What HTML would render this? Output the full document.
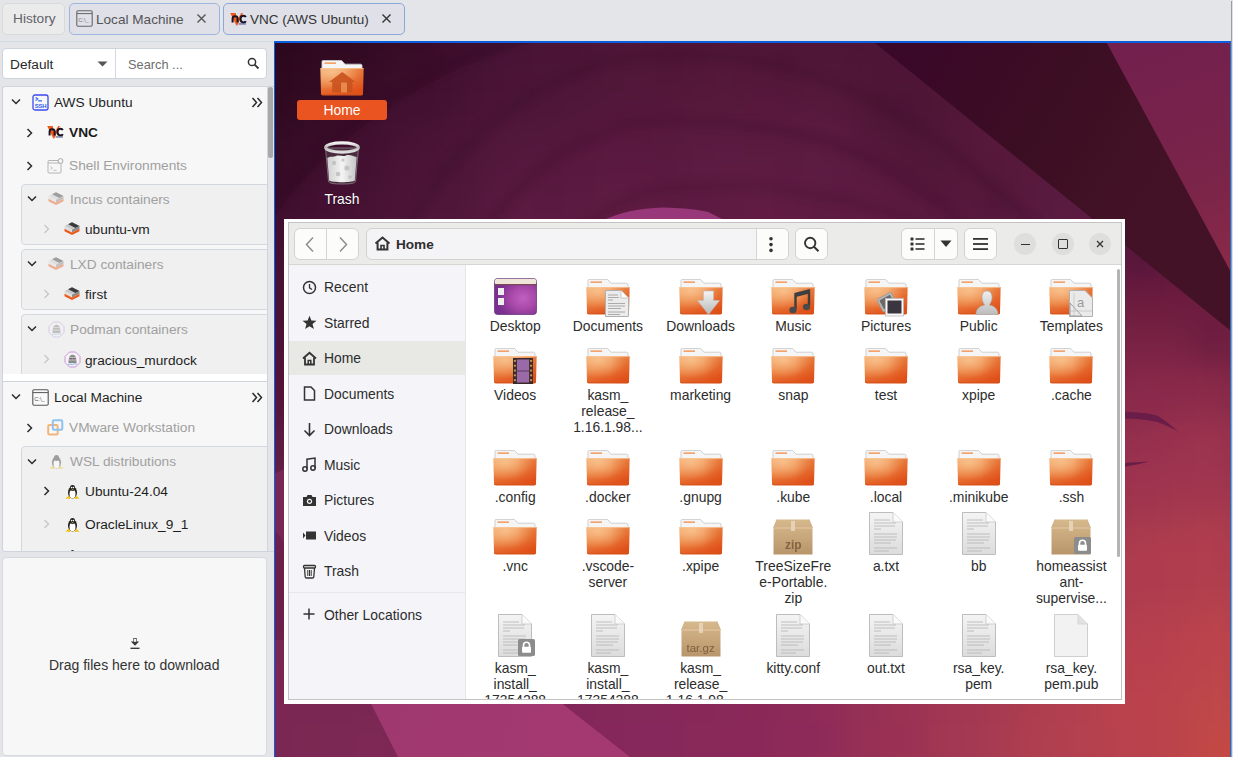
<!DOCTYPE html>
<html><head><meta charset="utf-8">
<style>
*{box-sizing:border-box}
html,body{margin:0;padding:0}
body{width:1233px;height:757px;overflow:hidden;position:relative;background:#e4e5e8;font-family:"Liberation Sans",sans-serif;color:#1e1e1e}
.a{position:absolute}
#wall i{display:block}
.tab{position:absolute;top:3px;height:32px;border-radius:5px;font-size:13.7px;line-height:30px;color:#444}
.t{position:absolute;white-space:nowrap;font-size:13.7px;line-height:16px}
/* tree */
#tree{left:2px;top:86px;width:272px;height:466px;background:#f7f7f7;border:1px solid #cfd4dc;border-right:none;border-radius:3px 0 0 3px;overflow:hidden}
.box{position:absolute;left:18px;width:260px;background:#f0f0f0;border:1px solid #d3d8e0;border-radius:4px}
.gray{color:#a0a0a0}
/* file manager */
#win{left:284px;top:219px;width:841px;height:485px;background:#fff}
#inner{left:4px;top:3px;width:834px;height:478px;border:1px solid #c8c8c8;background:#fff;overflow:hidden}
.ft{position:absolute;font-size:13.9px;line-height:16px;color:#2c2c2c;text-align:center;width:92px;white-space:nowrap}
.btn{background:#fcfcfb;border:1px solid #d2d2ce;border-radius:6px}
</style></head><body>

<!-- ============ TAB BAR ============ -->
<div class="tab" style="left:2px;width:63px;background:#ebebeb;border:1px solid #d9d9d9;padding-left:10px;color:#626268">History</div>
<div class="tab" style="left:69px;width:151px;background:#dfe0e8;border:1px solid #9db4dc;"></div>
<svg class="a" style="left:76px;top:10px" width="17" height="17" viewBox="0 0 17 17"><rect x="0.8" y="0.8" width="15.4" height="15.4" rx="1.2" fill="none" stroke="#666" stroke-width="1.1"/><path d="M0.8,3.6 H16.2" stroke="#666" stroke-width="1"/><text x="2.2" y="11.8" font-family="Liberation Sans" font-size="5.8" fill="#777">C:\_</text></svg>
<div class="t" style="left:96px;top:11.8px;color:#555;font-size:13.6px">Local Machine</div>
<svg class="a" style="left:196px;top:13px" width="11" height="11" viewBox="0 0 11 11"><path d="M1.5,1.5 L9.5,9.5 M9.5,1.5 L1.5,9.5" stroke="#555" stroke-width="1.4"/></svg>
<div class="tab" style="left:223px;width:182px;background:#dfe0e8;border:1px solid #8aa8d8;"></div>
<svg class="a" style="left:230px;top:12px" width="18" height="14" viewBox="0 0 18 14"><path d="M0.2,1 H5.8 L7.2,8.2 L11.2,1 H12.9 L7.3,13.4 H6.3 Z" fill="#f05a1a"/><path d="M2.6,10.6 V6.6 C2.6,4.9 3.7,4.2 5.1,4.2 C6.5,4.2 7.6,4.9 7.6,6.6 V10.6" fill="none" stroke="#1d1220" stroke-width="2"/><path d="M15.8,5.1 C15.4,4.2 14.6,3.8 13.5,3.8 C11.6,3.8 10.5,5 10.5,7.1 C10.5,9.2 11.6,10.4 13.5,10.4 C14.6,10.4 15.4,10 15.8,9.1" fill="none" stroke="#1d1220" stroke-width="2"/><rect x="8.6" y="11.4" width="7.4" height="1.1" fill="#4b5a90"/></svg>
<div class="t" style="left:250px;top:11.6px;color:#333;font-size:13.5px">VNC (AWS Ubuntu)</div>
<svg class="a" style="left:381px;top:13px" width="11" height="11" viewBox="0 0 11 11"><path d="M1.5,1.5 L9.5,9.5 M9.5,1.5 L1.5,9.5" stroke="#333" stroke-width="1.4"/></svg>
<div class="a" style="left:0;top:41px;width:273px;height:1px;background:#d3d9e3"></div>

<!-- ============ COMBO / SEARCH ============ -->
<div class="a" style="left:2px;top:48px;width:265px;height:31px;background:#fff;border:1px solid #cdd4de;border-radius:4px"></div>
<div class="a" style="left:115px;top:49px;width:1px;height:29px;background:#d3d9e3"></div>
<div class="t" style="left:10px;top:56.5px;color:#2a2a2a">Default</div>
<svg class="a" style="left:97px;top:61px" width="11" height="6" viewBox="0 0 11 6"><path d="M0.5,0.5 H10.5 L5.5,5.5 Z" fill="#555"/></svg>
<div class="t" style="left:128px;top:56.5px;color:#6e6e6e;font-size:12.8px">Search ...</div>
<svg class="a" style="left:247px;top:57px" width="13" height="13" viewBox="0 0 13 13"><circle cx="5" cy="5" r="3.6" fill="none" stroke="#333" stroke-width="1.5"/><path d="M7.6,7.6 L11.5,11.5" stroke="#333" stroke-width="1.8"/></svg>

<!-- ============ TREE ============ -->
<div id="tree" class="a">
<!-- section 1 -->
<svg class="a" style="left:8px;top:11px" width="10" height="8" viewBox="0 0 10 8"><path d="M1,1.5 L5,5.5 L9,1.5" fill="none" stroke="#2a2a2a" stroke-width="1.5"/></svg>
<svg class="a" style="left:29px;top:7px" width="17" height="17" viewBox="0 0 17 17"><rect x="1" y="1" width="15" height="15" rx="2" fill="none" stroke="#3b4af2" stroke-width="1.3"/><path d="M3.6,3.4 L5.8,4.9 L3.6,6.4 M6.2,6.9 H10" fill="none" stroke="#2f6cf0" stroke-width="1.2"/><text x="8.5" y="13.8" font-family="Liberation Sans" font-weight="700" font-size="6" fill="#2f5ef0" text-anchor="middle" letter-spacing="-0.2">SSH</text></svg>
<div class="t" style="left:51px;top:7.5px">AWS Ubuntu</div>
<svg class="a" style="left:248px;top:10px" width="12" height="11" viewBox="0 0 12 11"><path d="M1.5,1 L5.5,5.5 L1.5,10 M6.5,1 L10.5,5.5 L6.5,10" fill="none" stroke="#2a2a2a" stroke-width="1.5"/></svg>

<svg class="a" style="left:23px;top:41px" width="8" height="10" viewBox="0 0 8 10"><path d="M1.5,1 L5.5,5 L1.5,9" fill="none" stroke="#2a2a2a" stroke-width="1.5"/></svg>
<svg class="a" style="left:44px;top:38px" width="18" height="14" viewBox="0 0 18 14"><path d="M0.2,1 H5.8 L7.2,8.2 L11.2,1 H12.9 L7.3,13.4 H6.3 Z" fill="#f05a1a"/><path d="M2.6,10.6 V6.6 C2.6,4.9 3.7,4.2 5.1,4.2 C6.5,4.2 7.6,4.9 7.6,6.6 V10.6" fill="none" stroke="#1d1220" stroke-width="2"/><path d="M15.8,5.1 C15.4,4.2 14.6,3.8 13.5,3.8 C11.6,3.8 10.5,5 10.5,7.1 C10.5,9.2 11.6,10.4 13.5,10.4 C14.6,10.4 15.4,10 15.8,9.1" fill="none" stroke="#1d1220" stroke-width="2"/><rect x="8.6" y="11.4" width="7.4" height="1.1" fill="#4b5a90"/></svg>
<div class="t" style="left:66px;top:37.5px;font-weight:700;color:#1a1a1a">VNC</div>

<svg class="a" style="left:23px;top:74px" width="8" height="10" viewBox="0 0 8 10"><path d="M1.5,1 L5.5,5 L1.5,9" fill="none" stroke="#2a2a2a" stroke-width="1.5"/></svg>
<svg class="a" style="left:44px;top:71px" width="17" height="16" viewBox="0 0 17 16"><rect x="1" y="2.5" width="13" height="12.5" rx="1" fill="none" stroke="#b5b5b5" stroke-width="1"/><path d="M1,5 H14" stroke="#b5b5b5" stroke-width="1"/><path d="M3.5,8.5 L5.5,10 L3.5,11.5 M6.5,12.3 H9.5" fill="none" stroke="#b8b8b8" stroke-width="0.9"/><circle cx="13.5" cy="3" r="2.4" fill="#f7f7f7" stroke="#a8a8a8" stroke-width="1"/></svg>
<div class="t gray" style="left:66px;top:70.5px">Shell Environments</div>

<div class="box" style="top:96.5px;height:61px"></div>
<svg class="a" style="left:24px;top:108px" width="10" height="8" viewBox="0 0 10 8"><path d="M1,1.5 L5,5.5 L9,1.5" fill="none" stroke="#2a2a2a" stroke-width="1.5"/></svg>
<svg class="a" style="left:45px;top:104px" width="16" height="16" viewBox="0 0 16 16"><g opacity="0.45" transform="translate(0,1)"><path d="M0.5,4 L8,0.3 L15.5,4 L8,7.7 Z" fill="#c8c8c8"/><path d="M6,1.3 L8,0.3 L15.5,4 L11.5,6 L4.2,2.2 Z" fill="#3a3a3a"/><path d="M0.5,4 L8,7.7 V10.5 L0.5,6.8 Z" fill="#dedede"/><path d="M15.5,4 L8,7.7 V10.5 L15.5,6.8 Z" fill="#8a8a8a"/><path d="M0.5,6.8 L8,10.5 L15.5,6.8 V9.2 L8,12.9 L0.5,9.2 Z" fill="#ea5a1c"/></g></svg>
<div class="t gray" style="left:67px;top:105px">Incus containers</div>
<svg class="a" style="left:40px;top:137px" width="8" height="10" viewBox="0 0 8 10"><path d="M1.5,1 L5.5,5 L1.5,9" fill="none" stroke="#c4c4c4" stroke-width="1.2"/></svg>
<svg class="a" style="left:61px;top:134px" width="16" height="16" viewBox="0 0 16 16"><g transform="translate(0,1)"><path d="M0.5,4 L8,0.3 L15.5,4 L8,7.7 Z" fill="#c8c8c8"/><path d="M6,1.3 L8,0.3 L15.5,4 L11.5,6 L4.2,2.2 Z" fill="#3a3a3a"/><path d="M0.5,4 L8,7.7 V10.5 L0.5,6.8 Z" fill="#dedede"/><path d="M15.5,4 L8,7.7 V10.5 L15.5,6.8 Z" fill="#8a8a8a"/><path d="M0.5,6.8 L8,10.5 L15.5,6.8 V9.2 L8,12.9 L0.5,9.2 Z" fill="#ea5a1c"/></g></svg>
<div class="t" style="left:82px;top:135px">ubuntu-vm</div>

<div class="box" style="top:161.5px;height:61px"></div>
<svg class="a" style="left:24px;top:173px" width="10" height="8" viewBox="0 0 10 8"><path d="M1,1.5 L5,5.5 L9,1.5" fill="none" stroke="#2a2a2a" stroke-width="1.5"/></svg>
<svg class="a" style="left:45px;top:169px" width="16" height="16" viewBox="0 0 16 16"><g opacity="0.45" transform="translate(0,1)"><path d="M0.5,4 L8,0.3 L15.5,4 L8,7.7 Z" fill="#c8c8c8"/><path d="M6,1.3 L8,0.3 L15.5,4 L11.5,6 L4.2,2.2 Z" fill="#3a3a3a"/><path d="M0.5,4 L8,7.7 V10.5 L0.5,6.8 Z" fill="#dedede"/><path d="M15.5,4 L8,7.7 V10.5 L15.5,6.8 Z" fill="#8a8a8a"/><path d="M0.5,6.8 L8,10.5 L15.5,6.8 V9.2 L8,12.9 L0.5,9.2 Z" fill="#ea5a1c"/></g></svg>
<div class="t gray" style="left:67px;top:170px">LXD containers</div>
<svg class="a" style="left:40px;top:202px" width="8" height="10" viewBox="0 0 8 10"><path d="M1.5,1 L5.5,5 L1.5,9" fill="none" stroke="#c4c4c4" stroke-width="1.2"/></svg>
<svg class="a" style="left:61px;top:199px" width="16" height="16" viewBox="0 0 16 16"><g transform="translate(0,1)"><path d="M0.5,4 L8,0.3 L15.5,4 L8,7.7 Z" fill="#c8c8c8"/><path d="M6,1.3 L8,0.3 L15.5,4 L11.5,6 L4.2,2.2 Z" fill="#3a3a3a"/><path d="M0.5,4 L8,7.7 V10.5 L0.5,6.8 Z" fill="#dedede"/><path d="M15.5,4 L8,7.7 V10.5 L15.5,6.8 Z" fill="#8a8a8a"/><path d="M0.5,6.8 L8,10.5 L15.5,6.8 V9.2 L8,12.9 L0.5,9.2 Z" fill="#ea5a1c"/></g></svg>
<div class="t" style="left:82px;top:199.5px">first</div>

<div class="box" style="top:226.5px;height:80px"></div>
<svg class="a" style="left:24px;top:238px" width="10" height="8" viewBox="0 0 10 8"><path d="M1,1.5 L5,5.5 L9,1.5" fill="none" stroke="#2a2a2a" stroke-width="1.5"/></svg>
<svg class="a" style="left:45px;top:234px" width="17" height="17" viewBox="0 0 17 17"><g opacity="0.4"><path d="M5.5,1 H11.5 L16,5.5 V11.5 L11.5,16 H5.5 L1,11.5 V5.5 Z" fill="#f4f4f4" stroke="#a88ad8" stroke-width="0.9"/><path d="M4.5,12 C4.5,7 5.5,3.8 8.5,3.8 C11.5,3.8 12.5,7 12.5,12 Z" fill="#777"/><path d="M5.5,6.5 H11.5 M5,9 H12" stroke="#d0d0d0" stroke-width="0.8"/><path d="M4,13.5 C6,12.5 8,14 10,13 C11,12.5 12,13 13,13.2" fill="none" stroke="#8ab0e0" stroke-width="1"/></g></svg>
<div class="t gray" style="left:67px;top:235px">Podman containers</div>
<svg class="a" style="left:40px;top:267px" width="8" height="10" viewBox="0 0 8 10"><path d="M1.5,1 L5.5,5 L1.5,9" fill="none" stroke="#c4c4c4" stroke-width="1.2"/></svg>
<svg class="a" style="left:61px;top:264px" width="17" height="17" viewBox="0 0 17 17"><path d="M5.5,1 H11.5 L16,5.5 V11.5 L11.5,16 H5.5 L1,11.5 V5.5 Z" fill="#f4f4f4" stroke="#c88ad8" stroke-width="0.9"/><path d="M4.5,12 C4.5,7 5.5,3.8 8.5,3.8 C11.5,3.8 12.5,7 12.5,12 Z" fill="#8a8a8a"/><path d="M5.5,6.5 H11.5 M5,9 H12" stroke="#d0d0d0" stroke-width="0.8"/><path d="M4,13.5 C6,12.5 8,14 10,13 C11,12.5 12,13 13,13.2" fill="none" stroke="#8ab0e0" stroke-width="1"/><circle cx="7" cy="7.6" r="0.7" fill="#6a2a6a"/><circle cx="10" cy="7.6" r="0.7" fill="#6a2a6a"/></svg>
<div class="t" style="left:82px;top:265.5px">gracious_murdock</div>

<div class="a" style="left:0;top:287px;width:265px;height:8px;background:#fff;border-bottom:1px solid #d0d5dd"></div>
<div class="a" style="left:0;top:295px;width:265px;height:175px;background:#f7f7f7"></div>
<!-- section 2 -->
<svg class="a" style="left:8px;top:306px" width="10" height="8" viewBox="0 0 10 8"><path d="M1,1.5 L5,5.5 L9,1.5" fill="none" stroke="#2a2a2a" stroke-width="1.5"/></svg>
<svg class="a" style="left:29px;top:302px" width="17" height="17" viewBox="0 0 17 17"><rect x="0.8" y="0.8" width="15.4" height="15.4" rx="1.2" fill="#fafafa" stroke="#555" stroke-width="1.1"/><path d="M0.8,3.6 H16.2" stroke="#555" stroke-width="1"/><text x="2.2" y="11.8" font-family="Liberation Sans" font-size="5.8" fill="#555">C:\_</text></svg>
<div class="t" style="left:51px;top:302.5px">Local Machine</div>
<svg class="a" style="left:248px;top:305px" width="12" height="11" viewBox="0 0 12 11"><path d="M1.5,1 L5.5,5.5 L1.5,10 M6.5,1 L10.5,5.5 L6.5,10" fill="none" stroke="#2a2a2a" stroke-width="1.5"/></svg>

<svg class="a" style="left:23px;top:336px" width="8" height="10" viewBox="0 0 8 10"><path d="M1.5,1 L5.5,5 L1.5,9" fill="none" stroke="#2a2a2a" stroke-width="1.5"/></svg>
<svg class="a" style="left:44px;top:332px" width="17" height="17" viewBox="0 0 17 17"><rect x="1.2" y="6" width="9.5" height="9.5" rx="1.2" fill="none" stroke="#f2b47a" stroke-width="2"/><rect x="5.8" y="1.2" width="9.5" height="9.5" rx="1.2" fill="none" stroke="#8cc4ee" stroke-width="2"/></svg>
<div class="t gray" style="left:66px;top:332.5px">VMware Workstation</div>

<div class="box" style="top:358.5px;height:120px"></div>
<svg class="a" style="left:24px;top:371px" width="10" height="8" viewBox="0 0 10 8"><path d="M1,1.5 L5,5.5 L9,1.5" fill="none" stroke="#2a2a2a" stroke-width="1.5"/></svg>
<svg class="a" style="left:45px;top:366px" width="17" height="17" viewBox="0 0 17 17"><g opacity="0.4"><ellipse cx="8.5" cy="9.5" rx="4.5" ry="6" fill="#222"/><ellipse cx="8.5" cy="11" rx="3" ry="4.2" fill="#fff"/><ellipse cx="8.5" cy="5" rx="2.6" ry="3" fill="#222"/><path d="M1.5,15.5 L5,12.5 L6.5,16 Z M15.5,15.5 L12,12.5 L10.5,16 Z" fill="#f4c20d"/></g></svg>
<div class="t gray" style="left:67px;top:366.5px">WSL distributions</div>
<svg class="a" style="left:40px;top:399px" width="8" height="10" viewBox="0 0 8 10"><path d="M1.5,1 L5.5,5 L1.5,9" fill="none" stroke="#2a2a2a" stroke-width="1.5"/></svg>
<svg class="a" style="left:61px;top:396px" width="17" height="17" viewBox="0 0 17 17"><ellipse cx="8.5" cy="9.5" rx="4.5" ry="6" fill="#222"/><ellipse cx="8.5" cy="11" rx="3" ry="4.2" fill="#fff"/><ellipse cx="8.5" cy="5" rx="2.6" ry="3" fill="#222"/><circle cx="7.6" cy="4.6" r="0.8" fill="#fff"/><circle cx="9.4" cy="4.6" r="0.8" fill="#fff"/><path d="M7.3,6.2 L8.5,7.2 L9.7,6.2 Z" fill="#f4b80d"/><path d="M1.5,15.5 L5,12.5 L6.5,16 Z M15.5,15.5 L12,12.5 L10.5,16 Z" fill="#f4c20d"/></svg>
<div class="t" style="left:82px;top:396.5px">Ubuntu-24.04</div>
<svg class="a" style="left:40px;top:432px" width="8" height="10" viewBox="0 0 8 10"><path d="M1.5,1 L5.5,5 L1.5,9" fill="none" stroke="#c4c4c4" stroke-width="1.2"/></svg>
<svg class="a" style="left:61px;top:429px" width="17" height="17" viewBox="0 0 17 17"><ellipse cx="8.5" cy="9.5" rx="4.5" ry="6" fill="#222"/><ellipse cx="8.5" cy="11" rx="3" ry="4.2" fill="#fff"/><ellipse cx="8.5" cy="5" rx="2.6" ry="3" fill="#222"/><circle cx="7.6" cy="4.6" r="0.8" fill="#fff"/><circle cx="9.4" cy="4.6" r="0.8" fill="#fff"/><path d="M7.3,6.2 L8.5,7.2 L9.7,6.2 Z" fill="#f4b80d"/><path d="M1.5,15.5 L5,12.5 L6.5,16 Z M15.5,15.5 L12,12.5 L10.5,16 Z" fill="#f4c20d"/></svg>
<div class="t" style="left:82px;top:429.5px">OracleLinux_9_1</div>
<svg class="a" style="left:61px;top:461px" width="17" height="6" viewBox="0 0 17 6"><ellipse cx="8.5" cy="4" rx="1.6" ry="2" fill="#222"/></svg>

<div class="a" style="left:264px;top:0;width:1px;height:464px;background:#d0d5dd"></div>
<div class="a" style="left:265px;top:-1px;width:6px;height:470px;background:#e4e5e8"></div>
<div class="a" style="left:265px;top:0px;width:5px;height:71px;border-radius:2.5px;background:#a8a8a8"></div>
</div>

<!-- ============ DRAG ZONE ============ -->
<div class="a" style="left:2px;top:557px;width:265px;height:199px;background:#f7f7f7;border:1px solid #d6dae0;border-radius:4px"></div>
<svg class="a" style="left:129px;top:637px" width="12" height="13" viewBox="0 0 12 13"><path d="M4.3,1 H7.7 V4.6 H10.2 L6,8.8 L1.8,4.6 H4.3 Z" fill="#3a3a3a"/><rect x="4.9" y="1.8" width="2.2" height="3" fill="#f7f7f7"/><path d="M1.5,11.3 H10.5" stroke="#3a3a3a" stroke-width="1.4"/></svg>
<div class="t" style="left:49px;top:657px;font-size:14px;color:#333">Drag files here to download</div>

<!-- ============ VNC ============ -->
<div class="a" style="left:1231px;top:1px;width:1px;height:756px;background:#9d9d9d"></div>
<div class="a" style="left:1232px;top:0;width:1px;height:757px;background:#dde0ea"></div>
<div id="vnc" class="a" style="left:274px;top:41px;width:957px;height:716px;background:#3a0c28;overflow:hidden;border-top:2px solid #0a5ee0;border-left:1px solid #0a5ee0;border-right:1px solid #1a6ae0">
<div id="wall" class="a" style="left:-41px;top:-40px;width:1050px;height:810px;filter:blur(14px);display:grid;grid-template-columns:repeat(35,30px);grid-auto-rows:30px"><i style="background:#2e081e"></i><i style="background:#2d071d"></i><i style="background:#300920"></i><i style="background:#330a22"></i><i style="background:#350b24"></i><i style="background:#390c28"></i><i style="background:#3b0c29"></i><i style="background:#3f0f2d"></i><i style="background:#411030"></i><i style="background:#431131"></i><i style="background:#461232"></i><i style="background:#471233"></i><i style="background:#491334"></i><i style="background:#4b1434"></i><i style="background:#4b1333"></i><i style="background:#4c1334"></i><i style="background:#4d1435"></i><i style="background:#4c1434"></i><i style="background:#4c1334"></i><i style="background:#4c1434"></i><i style="background:#4a1333"></i><i style="background:#4b1333"></i><i style="background:#4d1434"></i><i style="background:#4f1536"></i><i style="background:#521637"></i><i style="background:#541738"></i><i style="background:#571839"></i><i style="background:#59193a"></i><i style="background:#5c1a3b"></i><i style="background:#5e1b3c"></i><i style="background:#601b3c"></i><i style="background:#621c3d"></i><i style="background:#641d3d"></i><i style="background:#661d3e"></i><i style="background:#681e3e"></i><i style="background:#2d071d"></i><i style="background:#2a061b"></i><i style="background:#300920"></i><i style="background:#310921"></i><i style="background:#320a22"></i><i style="background:#380b27"></i><i style="background:#390b27"></i><i style="background:#3e0e2d"></i><i style="background:#401030"></i><i style="background:#421131"></i><i style="background:#461233"></i><i style="background:#461232"></i><i style="background:#491334"></i><i style="background:#4c1434"></i><i style="background:#4a1232"></i><i style="background:#4b1333"></i><i style="background:#4e1535"></i><i style="background:#4b1333"></i><i style="background:#4a1232"></i><i style="background:#4c1434"></i><i style="background:#491232"></i><i style="background:#491333"></i><i style="background:#4b1434"></i><i style="background:#4e1535"></i><i style="background:#511636"></i><i style="background:#541738"></i><i style="background:#571839"></i><i style="background:#59193a"></i><i style="background:#5c1a3b"></i><i style="background:#5e1b3c"></i><i style="background:#601b3d"></i><i style="background:#621c3d"></i><i style="background:#641d3e"></i><i style="background:#661d3e"></i><i style="background:#681e3e"></i><i style="background:#2f0920"></i><i style="background:#2f0920"></i><i style="background:#320a22"></i><i style="background:#350b24"></i><i style="background:#360b26"></i><i style="background:#3b0d29"></i><i style="background:#3d0d2b"></i><i style="background:#400f2e"></i><i style="background:#431131"></i><i style="background:#461234"></i><i style="background:#481334"></i><i style="background:#491334"></i><i style="background:#4d1536"></i><i style="background:#4e1536"></i><i style="background:#4d1435"></i><i style="background:#4f1636"></i><i style="background:#511737"></i><i style="background:#4f1536"></i><i style="background:#4e1535"></i><i style="background:#501737"></i><i style="background:#4d1535"></i><i style="background:#4a1333"></i><i style="background:#4a1332"></i><i style="background:#4c1434"></i><i style="background:#501636"></i><i style="background:#531738"></i><i style="background:#561839"></i><i style="background:#59193b"></i><i style="background:#5c1a3b"></i><i style="background:#5e1b3c"></i><i style="background:#601b3d"></i><i style="background:#631c3d"></i><i style="background:#651d3e"></i><i style="background:#671d3e"></i><i style="background:#691e3f"></i><i style="background:#310a22"></i><i style="background:#2f0920"></i><i style="background:#340b24"></i><i style="background:#360b26"></i><i style="background:#380c27"></i><i style="background:#3d0e2c"></i><i style="background:#3e0e2d"></i><i style="background:#41102f"></i><i style="background:#471234"></i><i style="background:#481335"></i><i style="background:#4a1436"></i><i style="background:#4d1537"></i><i style="background:#4e1637"></i><i style="background:#4f1638"></i><i style="background:#511638"></i><i style="background:#521838"></i><i style="background:#521838"></i><i style="background:#531739"></i><i style="background:#521739"></i><i style="background:#521838"></i><i style="background:#501737"></i><i style="background:#491332"></i><i style="background:#471230"></i><i style="background:#4b1433"></i><i style="background:#501636"></i><i style="background:#531738"></i><i style="background:#56183a"></i><i style="background:#59193b"></i><i style="background:#5b1a3c"></i><i style="background:#5e1b3c"></i><i style="background:#601b3d"></i><i style="background:#631c3d"></i><i style="background:#651d3e"></i><i style="background:#681d3e"></i><i style="background:#6a1e3f"></i><i style="background:#340b25"></i><i style="background:#340b24"></i><i style="background:#370c27"></i><i style="background:#3b0d2a"></i><i style="background:#3c0d2b"></i><i style="background:#410f2f"></i><i style="background:#441131"></i><i style="background:#461232"></i><i style="background:#4b1436"></i><i style="background:#4f1639"></i><i style="background:#4f1639"></i><i style="background:#51163a"></i><i style="background:#55173c"></i><i style="background:#55173b"></i><i style="background:#54183b"></i><i style="background:#57193d"></i><i style="background:#57193d"></i><i style="background:#56193c"></i><i style="background:#56193c"></i><i style="background:#57193d"></i><i style="background:#54183b"></i><i style="background:#4e1535"></i><i style="background:#4b1434"></i><i style="background:#4d1535"></i><i style="background:#501637"></i><i style="background:#531738"></i><i style="background:#55183a"></i><i style="background:#58193b"></i><i style="background:#5b1a3c"></i><i style="background:#5d1a3d"></i><i style="background:#601b3d"></i><i style="background:#631c3d"></i><i style="background:#651c3e"></i><i style="background:#681d3e"></i><i style="background:#6b1e3f"></i><i style="background:#360c26"></i><i style="background:#350b24"></i><i style="background:#390d29"></i><i style="background:#3c0d2b"></i><i style="background:#3e0e2c"></i><i style="background:#441131"></i><i style="background:#461233"></i><i style="background:#481334"></i><i style="background:#4f1639"></i><i style="background:#52173b"></i><i style="background:#52173b"></i><i style="background:#55173c"></i><i style="background:#58183e"></i><i style="background:#58183e"></i><i style="background:#57183d"></i><i style="background:#591a3f"></i><i style="background:#5a1a40"></i><i style="background:#5a1a3f"></i><i style="background:#59193e"></i><i style="background:#5a1a40"></i><i style="background:#58193e"></i><i style="background:#53173a"></i><i style="background:#4d1435"></i><i style="background:#4d1535"></i><i style="background:#511637"></i><i style="background:#511737"></i><i style="background:#541839"></i><i style="background:#57193c"></i><i style="background:#591a3d"></i><i style="background:#5c1a3d"></i><i style="background:#5f1a3d"></i><i style="background:#621b3d"></i><i style="background:#651c3d"></i><i style="background:#681d3e"></i><i style="background:#6b1e3f"></i><i style="background:#3a0c29"></i><i style="background:#3a0c2a"></i><i style="background:#3c0d2b"></i><i style="background:#400f2f"></i><i style="background:#411030"></i><i style="background:#461233"></i><i style="background:#4a1437"></i><i style="background:#4b1437"></i><i style="background:#52173b"></i><i style="background:#58193e"></i><i style="background:#56183d"></i><i style="background:#57193e"></i><i style="background:#5c1a40"></i><i style="background:#5b1a40"></i><i style="background:#59193e"></i><i style="background:#5a193f"></i><i style="background:#5c1a40"></i><i style="background:#5f1b41"></i><i style="background:#5c1a40"></i><i style="background:#5a1a3f"></i><i style="background:#5a193f"></i><i style="background:#5c1940"></i><i style="background:#54173a"></i><i style="background:#511638"></i><i style="background:#511738"></i><i style="background:#4e1636"></i><i style="background:#53183a"></i><i style="background:#561a3e"></i><i style="background:#581a3d"></i><i style="background:#5b193c"></i><i style="background:#5d193c"></i><i style="background:#601a3c"></i><i style="background:#641b3d"></i><i style="background:#691d3e"></i><i style="background:#6c1e3f"></i><i style="background:#3c0d2b"></i><i style="background:#3b0c2b"></i><i style="background:#3e0e2d"></i><i style="background:#421030"></i><i style="background:#431031"></i><i style="background:#481335"></i><i style="background:#4c1538"></i><i style="background:#4d1538"></i><i style="background:#54183c"></i><i style="background:#591a3f"></i><i style="background:#57193e"></i><i style="background:#59193f"></i><i style="background:#5d1b41"></i><i style="background:#5d1a41"></i><i style="background:#5b1a3f"></i><i style="background:#5b1a3f"></i><i style="background:#5d1a41"></i><i style="background:#5f1b42"></i><i style="background:#5e1a41"></i><i style="background:#5c1a3f"></i><i style="background:#5c1a40"></i><i style="background:#5d1a41"></i><i style="background:#5b193f"></i><i style="background:#57183b"></i><i style="background:#55183a"></i><i style="background:#521738"></i><i style="background:#56193c"></i><i style="background:#571a3e"></i><i style="background:#591a3d"></i><i style="background:#59173b"></i><i style="background:#57163a"></i><i style="background:#5d183b"></i><i style="background:#641b3c"></i><i style="background:#6a1d3e"></i><i style="background:#6e1f3f"></i><i style="background:#400f2f"></i><i style="background:#400f2f"></i><i style="background:#410f2f"></i><i style="background:#431030"></i><i style="background:#441132"></i><i style="background:#481334"></i><i style="background:#4b1436"></i><i style="background:#4e1538"></i><i style="background:#52173b"></i><i style="background:#56183d"></i><i style="background:#57183d"></i><i style="background:#58193e"></i><i style="background:#5b1a40"></i><i style="background:#5b1a40"></i><i style="background:#5c1a40"></i><i style="background:#5d1a41"></i><i style="background:#5d1b41"></i><i style="background:#5e1b41"></i><i style="background:#5d1a40"></i><i style="background:#5d1a40"></i><i style="background:#5d1a40"></i><i style="background:#5d1a40"></i><i style="background:#5c1a3f"></i><i style="background:#5b1a3e"></i><i style="background:#5b1a3e"></i><i style="background:#5a1a3d"></i><i style="background:#5b1a3e"></i><i style="background:#5b1a3e"></i><i style="background:#5d193d"></i><i style="background:#57163a"></i><i style="background:#4f1238"></i><i style="background:#5c173a"></i><i style="background:#661b3c"></i><i style="background:#6c1d3e"></i><i style="background:#701f3f"></i><i style="background:#431030"></i><i style="background:#411030"></i><i style="background:#431031"></i><i style="background:#451132"></i><i style="background:#471233"></i><i style="background:#4a1335"></i><i style="background:#4c1437"></i><i style="background:#4f1538"></i><i style="background:#52173a"></i><i style="background:#55183c"></i><i style="background:#56183d"></i><i style="background:#58193e"></i><i style="background:#5a1a3f"></i><i style="background:#5c1a40"></i><i style="background:#5d1b41"></i><i style="background:#5e1b42"></i><i style="background:#5e1b41"></i><i style="background:#5e1b41"></i><i style="background:#5e1b40"></i><i style="background:#5e1b40"></i><i style="background:#5e1b40"></i><i style="background:#5e1b40"></i><i style="background:#5e1b40"></i><i style="background:#5c1a40"></i><i style="background:#5d1a40"></i><i style="background:#5f1b3f"></i><i style="background:#5e1a40"></i><i style="background:#5b1840"></i><i style="background:#601a3f"></i><i style="background:#63193b"></i><i style="background:#661939"></i><i style="background:#671a3b"></i><i style="background:#6b1c3d"></i><i style="background:#6e1e3e"></i><i style="background:#712040"></i><i style="background:#481033"></i><i style="background:#481033"></i><i style="background:#481133"></i><i style="background:#491133"></i><i style="background:#4a1335"></i><i style="background:#4c1436"></i><i style="background:#4f1538"></i><i style="background:#52163a"></i><i style="background:#54173b"></i><i style="background:#56183c"></i><i style="background:#57193d"></i><i style="background:#59193e"></i><i style="background:#5b1a3f"></i><i style="background:#5d1b41"></i><i style="background:#5e1b42"></i><i style="background:#5e1b42"></i><i style="background:#5e1b42"></i><i style="background:#5f1b42"></i><i style="background:#601c41"></i><i style="background:#611c41"></i><i style="background:#621c41"></i><i style="background:#621c41"></i><i style="background:#601c41"></i><i style="background:#5d1a40"></i><i style="background:#5e1b40"></i><i style="background:#631c41"></i><i style="background:#621b41"></i><i style="background:#5d1940"></i><i style="background:#661c40"></i><i style="background:#701e3f"></i><i style="background:#6f1d3c"></i><i style="background:#6f1d3d"></i><i style="background:#6b1c3d"></i><i style="background:#6d1d3e"></i><i style="background:#732040"></i><i style="background:#4b1134"></i><i style="background:#4a1034"></i><i style="background:#4b1134"></i><i style="background:#4c1235"></i><i style="background:#4e1436"></i><i style="background:#501538"></i><i style="background:#53163a"></i><i style="background:#56183c"></i><i style="background:#58193e"></i><i style="background:#58193e"></i><i style="background:#59193e"></i><i style="background:#5b1a3f"></i><i style="background:#5d1b40"></i><i style="background:#5f1b42"></i><i style="background:#601c43"></i><i style="background:#601c44"></i><i style="background:#611c44"></i><i style="background:#611c43"></i><i style="background:#621d42"></i><i style="background:#641d43"></i><i style="background:#661e43"></i><i style="background:#671e44"></i><i style="background:#661e44"></i><i style="background:#641d42"></i><i style="background:#661e42"></i><i style="background:#6c2043"></i><i style="background:#702144"></i><i style="background:#702143"></i><i style="background:#742143"></i><i style="background:#792242"></i><i style="background:#7a2242"></i><i style="background:#792242"></i><i style="background:#6a1c3d"></i><i style="background:#6f1e3f"></i><i style="background:#772241"></i><i style="background:#4f1135"></i><i style="background:#501034"></i><i style="background:#4f1135"></i><i style="background:#501337"></i><i style="background:#521539"></i><i style="background:#54163a"></i><i style="background:#56183c"></i><i style="background:#59193f"></i><i style="background:#5a1a40"></i><i style="background:#5a1a40"></i><i style="background:#5a1a40"></i><i style="background:#5c1b40"></i><i style="background:#5f1b42"></i><i style="background:#611c44"></i><i style="background:#631d46"></i><i style="background:#641e47"></i><i style="background:#631e46"></i><i style="background:#641d45"></i><i style="background:#651e44"></i><i style="background:#671f44"></i><i style="background:#691f46"></i><i style="background:#6a2047"></i><i style="background:#6a2047"></i><i style="background:#6b2046"></i><i style="background:#6f2145"></i><i style="background:#772446"></i><i style="background:#802848"></i><i style="background:#822849"></i><i style="background:#802646"></i><i style="background:#852747"></i><i style="background:#872847"></i><i style="background:#872847"></i><i style="background:#8a2947"></i><i style="background:#802544"></i><i style="background:#802644"></i><i style="background:#531338"></i><i style="background:#521236"></i><i style="background:#531438"></i><i style="background:#55163a"></i><i style="background:#56173b"></i><i style="background:#57183d"></i><i style="background:#59193e"></i><i style="background:#5a1a3f"></i><i style="background:#5a1a40"></i><i style="background:#5a1a40"></i><i style="background:#5b1a40"></i><i style="background:#5e1b41"></i><i style="background:#611c43"></i><i style="background:#631d45"></i><i style="background:#641e47"></i><i style="background:#641e48"></i><i style="background:#641e47"></i><i style="background:#661e46"></i><i style="background:#681f45"></i><i style="background:#6a2046"></i><i style="background:#6b2047"></i><i style="background:#6a2048"></i><i style="background:#6a2048"></i><i style="background:#6d2147"></i><i style="background:#742346"></i><i style="background:#7d2747"></i><i style="background:#842949"></i><i style="background:#862a4a"></i><i style="background:#872948"></i><i style="background:#8c2a49"></i><i style="background:#8e2a4a"></i><i style="background:#8e2b49"></i><i style="background:#8e2c48"></i><i style="background:#8c2b47"></i><i style="background:#892a46"></i><i style="background:#5b1a40"></i><i style="background:#5b1b41"></i><i style="background:#5b1a3f"></i><i style="background:#5b193f"></i><i style="background:#5b193f"></i><i style="background:#5b1a3f"></i><i style="background:#5c1a40"></i><i style="background:#5b1a40"></i><i style="background:#5b1a40"></i><i style="background:#5b1a40"></i><i style="background:#5d1b41"></i><i style="background:#601c42"></i><i style="background:#631d44"></i><i style="background:#641e46"></i><i style="background:#651e47"></i><i style="background:#651e47"></i><i style="background:#661e47"></i><i style="background:#681f47"></i><i style="background:#6b2047"></i><i style="background:#6d2147"></i><i style="background:#6e2147"></i><i style="background:#6d2148"></i><i style="background:#6d2148"></i><i style="background:#722347"></i><i style="background:#792547"></i><i style="background:#812848"></i><i style="background:#852a49"></i><i style="background:#882a49"></i><i style="background:#8d2c49"></i><i style="background:#942e4b"></i><i style="background:#96304b"></i><i style="background:#9c334c"></i><i style="background:#9f354d"></i><i style="background:#98314b"></i><i style="background:#932f49"></i><i style="background:#5f1d43"></i><i style="background:#5d1c42"></i><i style="background:#601d44"></i><i style="background:#611c44"></i><i style="background:#601c43"></i><i style="background:#601c42"></i><i style="background:#601c42"></i><i style="background:#5f1c42"></i><i style="background:#5f1c42"></i><i style="background:#601c42"></i><i style="background:#621d43"></i><i style="background:#641d44"></i><i style="background:#661e46"></i><i style="background:#681f47"></i><i style="background:#681f48"></i><i style="background:#691f48"></i><i style="background:#6a2048"></i><i style="background:#6d2148"></i><i style="background:#702248"></i><i style="background:#732348"></i><i style="background:#742349"></i><i style="background:#742449"></i><i style="background:#762449"></i><i style="background:#7a2649"></i><i style="background:#802849"></i><i style="background:#862a49"></i><i style="background:#8a2c49"></i><i style="background:#8f2d4a"></i><i style="background:#96304b"></i><i style="background:#9d334d"></i><i style="background:#9f344e"></i><i style="background:#9f344d"></i><i style="background:#a0354d"></i><i style="background:#9d344c"></i><i style="background:#99324a"></i><i style="background:#6c224c"></i><i style="background:#6f234e"></i><i style="background:#6c224c"></i><i style="background:#682048"></i><i style="background:#661e46"></i><i style="background:#651e45"></i><i style="background:#651e45"></i><i style="background:#651e45"></i><i style="background:#661e46"></i><i style="background:#661e46"></i><i style="background:#681f46"></i><i style="background:#691f47"></i><i style="background:#6b2048"></i><i style="background:#6d204a"></i><i style="background:#6f214b"></i><i style="background:#70224b"></i><i style="background:#72224b"></i><i style="background:#74234b"></i><i style="background:#76244b"></i><i style="background:#79254b"></i><i style="background:#7c264b"></i><i style="background:#7f274c"></i><i style="background:#81284c"></i><i style="background:#852a4b"></i><i style="background:#892c4b"></i><i style="background:#8e2e4a"></i><i style="background:#93304a"></i><i style="background:#97314b"></i><i style="background:#9c334b"></i><i style="background:#a0344c"></i><i style="background:#a1354d"></i><i style="background:#a3374c"></i><i style="background:#a4374c"></i><i style="background:#a3374b"></i><i style="background:#a0364a"></i><i style="background:#752652"></i><i style="background:#7a2856"></i><i style="background:#732550"></i><i style="background:#6e224c"></i><i style="background:#6b2049"></i><i style="background:#692048"></i><i style="background:#6a2048"></i><i style="background:#6b2049"></i><i style="background:#6d214a"></i><i style="background:#6d214a"></i><i style="background:#6d214a"></i><i style="background:#6e214a"></i><i style="background:#71224c"></i><i style="background:#74224e"></i><i style="background:#772350"></i><i style="background:#782451"></i><i style="background:#792451"></i><i style="background:#7a254f"></i><i style="background:#7d264e"></i><i style="background:#81284e"></i><i style="background:#862a4f"></i><i style="background:#8a2b51"></i><i style="background:#8c2c51"></i><i style="background:#8e2d4f"></i><i style="background:#922f4d"></i><i style="background:#97314c"></i><i style="background:#9c344c"></i><i style="background:#a0354c"></i><i style="background:#a4374c"></i><i style="background:#aa3a4c"></i><i style="background:#ac3b4c"></i><i style="background:#ae3d4c"></i><i style="background:#b13e4c"></i><i style="background:#ac3c4b"></i><i style="background:#a7394a"></i><i style="background:#70234d"></i><i style="background:#70224c"></i><i style="background:#70234d"></i><i style="background:#6f224c"></i><i style="background:#6e214b"></i><i style="background:#6d214a"></i><i style="background:#6e214b"></i><i style="background:#70224c"></i><i style="background:#72234e"></i><i style="background:#72234e"></i><i style="background:#72234d"></i><i style="background:#72234d"></i><i style="background:#75234f"></i><i style="background:#792452"></i><i style="background:#7d2556"></i><i style="background:#7e2657"></i><i style="background:#7e2656"></i><i style="background:#7f2653"></i><i style="background:#822851"></i><i style="background:#872a51"></i><i style="background:#8e2d53"></i><i style="background:#932f56"></i><i style="background:#952f56"></i><i style="background:#953053"></i><i style="background:#983250"></i><i style="background:#9f354e"></i><i style="background:#a5384e"></i><i style="background:#a8394e"></i><i style="background:#aa3a4d"></i><i style="background:#b03d4c"></i><i style="background:#b23e4c"></i><i style="background:#b23f4c"></i><i style="background:#b3404c"></i><i style="background:#b13e4b"></i><i style="background:#ad3c4a"></i><i style="background:#6f214a"></i><i style="background:#6d2048"></i><i style="background:#6f224b"></i><i style="background:#71234c"></i><i style="background:#70224c"></i><i style="background:#70224c"></i><i style="background:#71234d"></i><i style="background:#73234e"></i><i style="background:#74244f"></i><i style="background:#74244f"></i><i style="background:#74244e"></i><i style="background:#75244f"></i><i style="background:#782451"></i><i style="background:#7c2555"></i><i style="background:#7f2658"></i><i style="background:#80265a"></i><i style="background:#802659"></i><i style="background:#812755"></i><i style="background:#852953"></i><i style="background:#8b2b53"></i><i style="background:#922e56"></i><i style="background:#973059"></i><i style="background:#98305a"></i><i style="background:#983056"></i><i style="background:#9c3351"></i><i style="background:#a4374f"></i><i style="background:#ab3a50"></i><i style="background:#ac3a50"></i><i style="background:#ad3b4e"></i><i style="background:#b03d4c"></i><i style="background:#b23e4c"></i><i style="background:#b33f4b"></i><i style="background:#b5404b"></i><i style="background:#b5404b"></i><i style="background:#b23f4a"></i><i style="background:#75244f"></i><i style="background:#772550"></i><i style="background:#75244f"></i><i style="background:#74244e"></i><i style="background:#73244e"></i><i style="background:#73234d"></i><i style="background:#73234e"></i><i style="background:#74244e"></i><i style="background:#74244f"></i><i style="background:#74244f"></i><i style="background:#75244f"></i><i style="background:#782450"></i><i style="background:#7b2553"></i><i style="background:#7e2655"></i><i style="background:#802658"></i><i style="background:#80265a"></i><i style="background:#812659"></i><i style="background:#832856"></i><i style="background:#872a54"></i><i style="background:#8d2c54"></i><i style="background:#932f56"></i><i style="background:#973059"></i><i style="background:#983059"></i><i style="background:#993156"></i><i style="background:#9e3452"></i><i style="background:#a6384f"></i><i style="background:#ab3a4f"></i><i style="background:#ac3a4f"></i><i style="background:#af3c4e"></i><i style="background:#b53f4c"></i><i style="background:#b8414c"></i><i style="background:#b9424b"></i><i style="background:#bd454a"></i><i style="background:#bc444a"></i><i style="background:#b8424a"></i><i style="background:#782551"></i><i style="background:#7a2652"></i><i style="background:#782551"></i><i style="background:#772550"></i><i style="background:#76254f"></i><i style="background:#75244f"></i><i style="background:#75244f"></i><i style="background:#75244f"></i><i style="background:#75244f"></i><i style="background:#762450"></i><i style="background:#782451"></i><i style="background:#7b2553"></i><i style="background:#7e2654"></i><i style="background:#802656"></i><i style="background:#812757"></i><i style="background:#822758"></i><i style="background:#832757"></i><i style="background:#862956"></i><i style="background:#8a2a55"></i><i style="background:#8e2c54"></i><i style="background:#932e55"></i><i style="background:#973056"></i><i style="background:#993156"></i><i style="background:#9b3354"></i><i style="background:#a03651"></i><i style="background:#a6394f"></i><i style="background:#ab3a4f"></i><i style="background:#ae3c4e"></i><i style="background:#b33f4c"></i><i style="background:#ba414c"></i><i style="background:#bc424c"></i><i style="background:#bc434b"></i><i style="background:#c0464a"></i><i style="background:#bf454a"></i><i style="background:#bc4449"></i><i style="background:#792651"></i><i style="background:#7a2652"></i><i style="background:#792651"></i><i style="background:#792651"></i><i style="background:#782651"></i><i style="background:#782651"></i><i style="background:#772550"></i><i style="background:#772450"></i><i style="background:#782451"></i><i style="background:#7b2553"></i><i style="background:#7e2555"></i><i style="background:#802656"></i><i style="background:#812756"></i><i style="background:#832757"></i><i style="background:#842757"></i><i style="background:#852857"></i><i style="background:#872957"></i><i style="background:#892956"></i><i style="background:#8c2a56"></i><i style="background:#8f2c55"></i><i style="background:#942e55"></i><i style="background:#983154"></i><i style="background:#9b3353"></i><i style="background:#9f3552"></i><i style="background:#a33851"></i><i style="background:#a83a4f"></i><i style="background:#ad3d4e"></i><i style="background:#b13f4d"></i><i style="background:#b7414c"></i><i style="background:#bb424b"></i><i style="background:#bd434b"></i><i style="background:#be454a"></i><i style="background:#c24849"></i><i style="background:#c14748"></i><i style="background:#be4648"></i><i style="background:#7a2652"></i><i style="background:#7a2652"></i><i style="background:#7a2752"></i><i style="background:#7a2752"></i><i style="background:#7a2753"></i><i style="background:#7a2752"></i><i style="background:#792651"></i><i style="background:#792552"></i><i style="background:#7c2553"></i><i style="background:#802656"></i><i style="background:#822658"></i><i style="background:#832658"></i><i style="background:#842758"></i><i style="background:#852859"></i><i style="background:#862859"></i><i style="background:#872858"></i><i style="background:#892958"></i><i style="background:#8b2957"></i><i style="background:#8d2a57"></i><i style="background:#8f2b57"></i><i style="background:#942e55"></i><i style="background:#9a3254"></i><i style="background:#9d3353"></i><i style="background:#a23752"></i><i style="background:#a53951"></i><i style="background:#a93b50"></i><i style="background:#b03f4e"></i><i style="background:#b4414d"></i><i style="background:#b8424c"></i><i style="background:#be444b"></i><i style="background:#c0444a"></i><i style="background:#c04649"></i><i style="background:#c44a48"></i><i style="background:#c34947"></i><i style="background:#c14746"></i><i style="background:#7a2652"></i><i style="background:#7a2752"></i><i style="background:#7a2852"></i><i style="background:#7b2853"></i><i style="background:#7c2854"></i><i style="background:#7b2753"></i><i style="background:#7a2652"></i><i style="background:#7b2653"></i><i style="background:#7e2655"></i><i style="background:#822658"></i><i style="background:#84265a"></i><i style="background:#84265a"></i><i style="background:#852759"></i><i style="background:#86285a"></i><i style="background:#86285a"></i><i style="background:#882958"></i><i style="background:#8a2958"></i><i style="background:#8b2958"></i><i style="background:#8e2a58"></i><i style="background:#8e2a58"></i><i style="background:#942e55"></i><i style="background:#9b3254"></i><i style="background:#9c3254"></i><i style="background:#a43852"></i><i style="background:#a63a52"></i><i style="background:#aa3c50"></i><i style="background:#b3414e"></i><i style="background:#b4424e"></i><i style="background:#b9434c"></i><i style="background:#bc444c"></i><i style="background:#bd444b"></i><i style="background:#c04648"></i><i style="background:#c64a44"></i><i style="background:#c94b42"></i><i style="background:#c64944"></i><i style="background:#7a2652"></i><i style="background:#7a2652"></i><i style="background:#7a2752"></i><i style="background:#7b2753"></i><i style="background:#7c2854"></i><i style="background:#7b2753"></i><i style="background:#7a2652"></i><i style="background:#7b2653"></i><i style="background:#7f2655"></i><i style="background:#822658"></i><i style="background:#842659"></i><i style="background:#842659"></i><i style="background:#842759"></i><i style="background:#862859"></i><i style="background:#862859"></i><i style="background:#882958"></i><i style="background:#8a2958"></i><i style="background:#8b2958"></i><i style="background:#8e2a57"></i><i style="background:#8f2b57"></i><i style="background:#952e55"></i><i style="background:#9b3254"></i><i style="background:#9d3353"></i><i style="background:#a23752"></i><i style="background:#a53952"></i><i style="background:#aa3c50"></i><i style="background:#b1404e"></i><i style="background:#b4414e"></i><i style="background:#b8424c"></i><i style="background:#bb434c"></i><i style="background:#bc444a"></i><i style="background:#c14647"></i><i style="background:#c94b42"></i><i style="background:#cb4c40"></i><i style="background:#c74a42"></i><i style="background:#792652"></i><i style="background:#7a2652"></i><i style="background:#7a2752"></i><i style="background:#7a2752"></i><i style="background:#7b2753"></i><i style="background:#7a2752"></i><i style="background:#7a2652"></i><i style="background:#7c2653"></i><i style="background:#7e2654"></i><i style="background:#812657"></i><i style="background:#822658"></i><i style="background:#832658"></i><i style="background:#842758"></i><i style="background:#852858"></i><i style="background:#862857"></i><i style="background:#882957"></i><i style="background:#8a2957"></i><i style="background:#8b2a57"></i><i style="background:#8d2b56"></i><i style="background:#902c56"></i><i style="background:#952f54"></i><i style="background:#9a3253"></i><i style="background:#9d3453"></i><i style="background:#a13652"></i><i style="background:#a53951"></i><i style="background:#a93b4f"></i><i style="background:#ae3e4e"></i><i style="background:#b2404d"></i><i style="background:#b6414c"></i><i style="background:#b9424b"></i><i style="background:#bb434a"></i><i style="background:#bf4647"></i><i style="background:#c54844"></i><i style="background:#c74943"></i><i style="background:#c44843"></i></div>
<svg id="wsvg" class="a" style="left:-275px;top:-43px" width="1233" height="800" viewBox="0 0 1233 800">
<defs>
<filter id="sb" x="-10%" y="-10%" width="120%" height="120%"><feGaussianBlur stdDeviation="5"/></filter>
<linearGradient id="gb" x1="920" y1="60" x2="1150" y2="200" gradientUnits="userSpaceOnUse"><stop offset="0" stop-color="#3a0828"/><stop offset="0.5" stop-color="#3c0e23"/><stop offset="1" stop-color="#431226"/></linearGradient>
<linearGradient id="gp" x1="1150" y1="50" x2="1231" y2="270" gradientUnits="userSpaceOnUse"><stop offset="0" stop-color="#73204e"/><stop offset="0.6" stop-color="#7a2449"/><stop offset="1" stop-color="#8a2a48"/></linearGradient>
<linearGradient id="gw" x1="400" y1="700" x2="560" y2="757" gradientUnits="userSpaceOnUse"><stop offset="0" stop-color="#a03870"/><stop offset="1" stop-color="#a33970"/></linearGradient>
</defs>
<g fill="#8a3068" opacity="0.07">
<path d="M275,215 C330,140 420,75 530,43 L1231,43 L1231,757 L275,757 Z"/>
<path d="M385,300 C420,190 500,100 612,67 C680,55 760,60 830,85 C870,100 905,118 960,160 L1040,230 L1040,700 L385,700 Z"/>
<path d="M455,300 C500,200 560,150 633,131 C700,122 780,130 844,152 C880,165 920,185 980,240 L980,700 L455,700 Z"/>
<path d="M540,300 C580,230 620,200 675,194 C720,190 780,193 802,198 C850,205 900,211 950,250 L950,700 L540,700 Z"/>
</g>
<g fill="none" stroke="#1e0414" stroke-width="9" opacity="0.13" filter="url(#sb)" transform="translate(-2,-3)">
<path d="M272,212 C327,137 417,72 527,40"/>
<path d="M382,300 C417,187 497,97 609,64 C677,52 757,57 827,82 C867,97 902,115 957,157 L1037,227"/>
<path d="M452,300 C497,197 557,147 630,128 C697,119 777,127 841,149 C877,162 917,182 977,237"/>
<path d="M537,300 C577,227 617,197 672,191 C717,187 777,190 799,195 C847,202 897,208 947,247"/>
</g>
<polygon points="875,43 1107,43 1231,272 1231,331" fill="url(#gb)"/>
<polygon points="1107,43 1231,43 1231,272" fill="url(#gp)"/>
<polygon points="344,650 494,650 630,757 398,757" fill="url(#gw)"/>
<polygon points="260,480 300,462 300,565 260,510" fill="#782654"/>
<polygon points="260,510 300,565 300,640 260,640" fill="#681e48" opacity="0.6"/>
<path d="M604,220 C618,213 640,208 663,207.5 C685,208 700,210 708,212 L724,220 Z" fill="#98387a"/>
<path d="M1110,411 C1135,412 1150,413 1158,416 C1166,421 1172,426 1178,431.5 C1168,426 1160,422 1150,420.5 C1140,419 1125,418 1110,418 Z" fill="#6a1d48"/>
<path d="M1110,464 C1125,463 1138,462 1149,461.5 C1140,464 1130,466 1110,469 Z" fill="#6a1d48"/>
</svg>
<div class="a" style="left:-275px;top:-43px;width:1233px;height:757px">
<svg class="a" style="left:320px;top:60px" width="44" height="36"><use href="#fold"/></svg>
<svg class="a" style="left:328px;top:71px" width="29" height="23" viewBox="0 0 29 23"><path d="M1,11 L14.3,1 L27.6,11 H24.5 V21.5 H4.2 V11 Z" fill="#c9521e" opacity="0.9"/><rect x="13" y="11.5" width="6" height="10" fill="#e8884a"/></svg>
<div class="a" style="left:297px;top:100px;width:90px;height:20px;background:#e95420;border-radius:3px"></div>
<div class="t" style="left:297px;top:102px;width:90px;text-align:center;color:#fff;font-size:13.9px">Home</div>
<svg class="a" style="left:323px;top:141px" width="38" height="44" viewBox="0 0 38 44">
<defs><linearGradient id="tb" x1="0" y1="0" x2="0" y2="1"><stop offset="0" stop-color="#f2f2f2"/><stop offset="0.5" stop-color="#b8b8b8"/><stop offset="1" stop-color="#e0e0e0"/></linearGradient>
<linearGradient id="tw" x1="0" y1="0" x2="1" y2="0"><stop offset="0" stop-color="#cfcfcf"/><stop offset="0.5" stop-color="#f4f4f4"/><stop offset="1" stop-color="#c4c4c4"/></linearGradient></defs>
<path d="M2.5,7 L5.5,40.5 C6,42.2 10,43 19,43 C28,43 32,42.2 32.5,40.5 L35.5,7 Z" fill="#4a2c3e" stroke="#8a8088" stroke-width="0.8"/>
<path d="M4.3,17 C7,14.5 10,16.5 13,15 C16,13.5 20,16 23,14.5 C26.5,13 30,15.5 33.7,16 L31.8,39.5 C29,41.8 9,41.8 6.2,39.5 Z" fill="url(#tw)"/>
<g fill="#bdbdbd" opacity="0.8"><circle cx="11" cy="22" r="2.2"/><circle cx="24" cy="27" r="2.6"/><circle cx="15" cy="33" r="2.3"/><circle cx="27" cy="36" r="1.8"/><circle cx="20" cy="19" r="1.6"/></g>
<ellipse cx="19" cy="6.5" rx="16.3" ry="4.6" fill="none" stroke="url(#tb)" stroke-width="3.2"/>
</svg>
<div class="t" style="left:297px;top:190.5px;width:90px;text-align:center;color:#fff;font-size:13.9px;text-shadow:0 1px 1px rgba(0,0,0,0.5)">Trash</div>
</div>
</div>

<!-- ============ FILE MANAGER ============ -->
<div id="win" class="a"></div>
<div class="a" style="left:288px;top:222px;width:834px;height:478px;border:1px solid #c3c3c3;background:#fff"></div>
<!-- headerbar -->
<div class="a" style="left:289px;top:223px;width:832px;height:42px;background:#ebebe9;border-bottom:1px solid #d6d6d3"></div>
<div class="a btn" style="left:294px;top:228px;width:65px;height:32px"></div>
<div class="a" style="left:326px;top:229px;width:1px;height:30px;background:#d4d4d0"></div>
<svg class="a" style="left:304px;top:236px" width="12" height="17" viewBox="0 0 12 17"><path d="M9,1.5 L2.5,8.5 L9,15.5" fill="none" stroke="#8e8e8e" stroke-width="1.5"/></svg>
<svg class="a" style="left:337px;top:236px" width="12" height="17" viewBox="0 0 12 17"><path d="M3,1.5 L9.5,8.5 L3,15.5" fill="none" stroke="#8e8e8e" stroke-width="1.5"/></svg>
<div class="a btn" style="left:366px;top:228px;width:423px;height:32px;background:#f4f4f7"></div>
<div class="a" style="left:756px;top:229px;width:32px;height:30px;background:#fcfcfb;border-left:1px solid #d4d4d0;border-radius:0 5px 5px 0"></div>
<svg class="a" style="left:374px;top:236px" width="17" height="15" viewBox="0 0 17 15"><path d="M1.5,7.5 L8.5,1.5 L15.5,7.5" fill="none" stroke="#333" stroke-width="2"/><path d="M3.6,6.5 V13.5 H13.4 V6.5" fill="none" stroke="#333" stroke-width="2"/><path d="M7,13.5 V9.5 H10 V13.5" fill="none" stroke="#333" stroke-width="1.6"/></svg>
<div class="t" style="left:396px;top:236.5px;font-weight:700;font-size:13.6px;color:#2e2e2e">Home</div>
<svg class="a" style="left:768px;top:236px" width="6" height="18" viewBox="0 0 6 18"><circle cx="3" cy="2.8" r="1.8" fill="#333"/><circle cx="3" cy="8.6" r="1.8" fill="#333"/><circle cx="3" cy="14.4" r="1.8" fill="#333"/></svg>
<div class="a btn" style="left:795px;top:228px;width:33px;height:32px"></div>
<svg class="a" style="left:803px;top:236px" width="18" height="17" viewBox="0 0 18 17"><circle cx="7.2" cy="7" r="5.2" fill="none" stroke="#333" stroke-width="1.9"/><path d="M11,10.8 L15.5,15.3" stroke="#333" stroke-width="2"/></svg>
<div class="a btn" style="left:901px;top:228px;width:57px;height:32px"></div>
<div class="a" style="left:934px;top:229px;width:1px;height:30px;background:#d4d4d0"></div>
<svg class="a" style="left:910px;top:237px" width="15" height="14" viewBox="0 0 15 14"><g fill="#333"><rect x="0.5" y="0.5" width="3" height="3" rx="0.5"/><rect x="0.5" y="5.5" width="3" height="3" rx="0.5"/><rect x="0.5" y="10.5" width="3" height="3" rx="0.5"/><rect x="5.5" y="1.2" width="9" height="1.6"/><rect x="5.5" y="6.2" width="9" height="1.6"/><rect x="5.5" y="11.2" width="9" height="1.6"/></g></svg>
<svg class="a" style="left:940px;top:240px" width="12" height="8" viewBox="0 0 12 8"><path d="M0.5,0.5 H11.5 L6,7 Z" fill="#333"/></svg>
<div class="a btn" style="left:964px;top:228px;width:33px;height:32px"></div>
<svg class="a" style="left:972px;top:237px" width="17" height="14" viewBox="0 0 17 14"><g fill="#333"><rect x="1" y="1" width="15" height="1.8"/><rect x="1" y="6.1" width="15" height="1.8"/><rect x="1" y="11.2" width="15" height="1.8"/></g></svg>
<div class="a" style="left:1014px;top:233px;width:22px;height:22px;border-radius:50%;background:#dededc"></div>
<div class="a" style="left:1021px;top:243.5px;width:9px;height:1.3px;background:#333"></div>
<div class="a" style="left:1052px;top:233px;width:22px;height:22px;border-radius:50%;background:#dededc"></div>
<div class="a" style="left:1058px;top:239px;width:9.5px;height:9.5px;border:1.3px solid #333;border-radius:1px"></div>
<div class="a" style="left:1089px;top:233px;width:22px;height:22px;border-radius:50%;background:#dededc"></div>
<svg class="a" style="left:1095px;top:239px" width="10" height="10" viewBox="0 0 10 10"><path d="M2,2 L8,8 M8,2 L2,8" stroke="#333" stroke-width="1.3"/></svg>
<!-- sidebar -->
<div class="a" style="left:289px;top:265px;width:177px;height:434px;background:#f5f5f9;border-right:1px solid #e6e6e8"></div>
<div class="a" style="left:289px;top:341px;width:176px;height:34px;background:#e8e8e5"></div>
<div class="a" style="left:289px;top:592px;width:176px;height:1px;background:#e8e8ea"></div>
<svg class="a" style="left:302px;top:279.7px" width="15" height="15" viewBox="0 0 15 15"><circle cx="7.5" cy="7.5" r="6" fill="none" stroke="#333" stroke-width="1.5"/><path d="M7.5,4 V7.8 L10,9.5" fill="none" stroke="#333" stroke-width="1.3"/></svg>
<div class="t" style="left:324px;top:279.1px;font-size:13.9px;color:#2c2c2c">Recent</div>
<svg class="a" style="left:302px;top:315.2px" width="15" height="15" viewBox="0 0 15 15"><path d="M7.5,0.8 L9.4,5.6 L14.5,5.8 L10.5,9 L11.9,14 L7.5,11.2 L3.1,14 L4.5,9 L0.5,5.8 L5.6,5.6 Z" fill="#333"/></svg>
<div class="t" style="left:324px;top:314.6px;font-size:13.9px;color:#2c2c2c">Starred</div>
<svg class="a" style="left:302px;top:350.7px" width="15" height="15" viewBox="0 0 15 15"><path d="M1,7.5 L7.5,1.8 L14,7.5" fill="none" stroke="#333" stroke-width="1.8"/><path d="M3,6.5 V13.5 H12 V6.5" fill="none" stroke="#333" stroke-width="1.8"/><path d="M6.2,13.5 V9.6 H8.8 V13.5" fill="none" stroke="#333" stroke-width="1.5"/></svg>
<div class="t" style="left:324px;top:350.1px;font-size:13.9px;color:#2c2c2c">Home</div>
<svg class="a" style="left:302px;top:386.2px" width="15" height="15" viewBox="0 0 15 15"><path d="M2.5,1 H9 L12.5,4.5 V14 H2.5 Z" fill="none" stroke="#333" stroke-width="1.5"/></svg>
<div class="t" style="left:324px;top:385.6px;font-size:13.9px;color:#2c2c2c">Documents</div>
<svg class="a" style="left:302px;top:421.7px" width="15" height="15" viewBox="0 0 15 15"><path d="M7.5,1 V13 M2.5,8.5 L7.5,13.5 L12.5,8.5" fill="none" stroke="#333" stroke-width="1.6"/></svg>
<div class="t" style="left:324px;top:421.1px;font-size:13.9px;color:#2c2c2c">Downloads</div>
<svg class="a" style="left:302px;top:457.2px" width="15" height="15" viewBox="0 0 15 15"><path d="M5,12 V2.2 L13,1 V11" fill="none" stroke="#333" stroke-width="1.5"/><circle cx="3" cy="12" r="2.2" fill="none" stroke="#333" stroke-width="1.5"/><circle cx="11" cy="11" r="2.2" fill="none" stroke="#333" stroke-width="1.5"/></svg>
<div class="t" style="left:324px;top:456.6px;font-size:13.9px;color:#2c2c2c">Music</div>
<svg class="a" style="left:302px;top:492.7px" width="15" height="15" viewBox="0 0 15 15"><path d="M1,4 H4.5 L5.5,2 H9.5 L10.5,4 H14 V13 H1 Z" fill="#333"/><circle cx="7.5" cy="8.3" r="2.6" fill="#f5f5f9"/><circle cx="7.5" cy="8.3" r="1.4" fill="#333"/></svg>
<div class="t" style="left:324px;top:492.1px;font-size:13.9px;color:#2c2c2c">Pictures</div>
<svg class="a" style="left:302px;top:528.2px" width="15" height="15" viewBox="0 0 15 15"><path d="M1,4.5 L3.5,7.5 L1,10.5 Z" fill="#333"/><rect x="4" y="3.5" width="10" height="8" fill="#333"/></svg>
<div class="t" style="left:324px;top:527.6px;font-size:13.9px;color:#2c2c2c">Videos</div>
<svg class="a" style="left:302px;top:563.7px" width="15" height="15" viewBox="0 0 15 15"><rect x="1.5" y="1.5" width="12" height="2.5" rx="1" fill="none" stroke="#333" stroke-width="1.3"/><path d="M2.5,4 L3.2,13 C3.3,13.8 3.8,14 4.5,14 H10.5 C11.2,14 11.7,13.8 11.8,13 L12.5,4" fill="none" stroke="#333" stroke-width="1.3"/><path d="M5.8,6 V12 M7.5,6 V12 M9.2,6 V12" stroke="#333" stroke-width="1"/></svg>
<div class="t" style="left:324px;top:563.1px;font-size:13.9px;color:#2c2c2c">Trash</div>
<svg class="a" style="left:303px;top:608px" width="12" height="12" viewBox="0 0 12 12"><path d="M6,0.5 V11.5 M0.5,6 H11.5" stroke="#333" stroke-width="1.5"/></svg>
<div class="t" style="left:324px;top:607.2px;font-size:13.9px;color:#2c2c2c">Other Locations</div>
<!-- content -->
<div class="a" style="left:466px;top:265px;width:655px;height:434px;overflow:hidden;background:#fff">
<div class="a" style="left:-466px;top:-265px;width:1233px;height:757px">
<svg width="0" height="0" style="position:absolute"><defs>
<linearGradient id="fg" x1="0" y1="0" x2="0.35" y2="1"><stop offset="0" stop-color="#f2a86c"/><stop offset="0.5" stop-color="#eb8242"/><stop offset="1" stop-color="#e2561e"/></linearGradient><radialGradient id="fh" cx="0.28" cy="0.15" r="0.65"><stop offset="0" stop-color="#ffd8a8" stop-opacity="0.6"/><stop offset="1" stop-color="#ffd8a8" stop-opacity="0"/></radialGradient><linearGradient id="fr" x1="0" y1="0" x2="1" y2="0"><stop offset="0.55" stop-color="#d8400a" stop-opacity="0"/><stop offset="1" stop-color="#d8400a" stop-opacity="0.3"/></linearGradient>
<linearGradient id="dg" x1="0" y1="0" x2="0" y2="1"><stop offset="0" stop-color="#f4f4f4"/><stop offset="1" stop-color="#dcdcdc"/></linearGradient>
<linearGradient id="pg" x1="0" y1="0" x2="0" y2="1"><stop offset="0" stop-color="#d6b98c"/><stop offset="1" stop-color="#b8956a"/></linearGradient>
<symbol id="fold" viewBox="0 0 44 36">
<path d="M2,9 V1.6 C2,0.9 2.5,0.4 3.2,0.4 H21.5 L25,4.2 H40.6 C41.4,4.2 42,4.8 42,5.6 V9 Z" fill="#f5f5f5" stroke="#c9c9c9" stroke-width="0.9"/>
<rect x="4.5" y="2.4" width="11.5" height="1.5" fill="#f39a5e"/>
<path d="M0.4,8 H43.6 L43,33.8 C42.9,34.9 42.2,35.5 41.2,35.5 H2.8 C1.8,35.5 1.1,34.9 1,33.8 Z" fill="url(#fg)"/><path d="M0.4,8 H43.6 L43,33.8 C42.9,34.9 42.2,35.5 41.2,35.5 H2.8 C1.8,35.5 1.1,34.9 1,33.8 Z" fill="url(#fh)"/><path d="M0.4,8 H43.6 L43,33.8 C42.9,34.9 42.2,35.5 41.2,35.5 H2.8 C1.8,35.5 1.1,34.9 1,33.8 Z" fill="url(#fr)"/><path d="M0.6,8.6 H43.4" stroke="#f8c89a" stroke-width="0.8"/>
<path d="M1,34.6 H43" stroke="#c8501c" stroke-width="0.8" opacity="0.7"/>
</symbol>
<symbol id="doc" viewBox="0 0 34 43">
<path d="M0.5,0.5 H24 L33.5,10 V42.5 H0.5 Z" fill="url(#dg)" stroke="#bdbdbd" stroke-width="1"/>
<path d="M24,0.5 V10 H33.5" fill="#fafafa" stroke="#c8c8c8" stroke-width="0.8"/>
<g stroke="#b4b4b4" stroke-width="0.8"><path d="M5,8 H21 M5,11 H27 M5,14 H26 M5,17 H12 M5,22 H28 M5,25 H28 M5,28 H27 M5,31 H22 M5,36 H28 M5,39 H20"/></g>
</symbol>
<symbol id="blank" viewBox="0 0 34 43">
<path d="M0.5,0.5 H24 L33.5,10 V42.5 H0.5 Z" fill="#f2f2f2" stroke="#cfcfcf" stroke-width="1"/>
<path d="M24,0.5 V10 H33.5" fill="#e2e2e2" stroke="#d0d0d0" stroke-width="0.8"/>
</symbol>
<symbol id="pkg" viewBox="0 0 40 36">
<path d="M4,0.5 H36 L39.5,9 V35.5 H0.5 V9 Z" fill="url(#pg)"/>
<path d="M0.5,9 H39.5" stroke="#e8c8a8" stroke-width="1.2"/>
<path d="M4,0.5 L0.5,9 M36,0.5 L39.5,9" stroke="#c9a87a" stroke-width="0.8"/>
<rect x="18" y="2" width="4" height="10" fill="#ead8c0" opacity="0.8"/>
</symbol>
<symbol id="lock" viewBox="0 0 16 16">
<rect x="0" y="0" width="16" height="16" rx="1.5" fill="#8c8c8c"/>
<path d="M5.2,7.5 V5.6 C5.2,3.8 6.4,3 8,3 C9.6,3 10.8,3.8 10.8,5.6 V7.5" fill="none" stroke="#fff" stroke-width="1.5"/>
<rect x="3.8" y="7.3" width="8.4" height="5.6" rx="0.6" fill="#fff"/>
</symbol>
</defs></svg>
<svg class="a" style="left:493.7px;top:278.0px" width="43" height="37" viewBox="0 0 43 37"><defs><radialGradient id="dkg" cx="0.68" cy="0.55" r="0.6"><stop offset="0" stop-color="#c060c0"/><stop offset="0.5" stop-color="#a848a8"/><stop offset="1" stop-color="#7a3090"/></radialGradient></defs><rect x="0.5" y="0.5" width="42" height="36" rx="3" fill="url(#dkg)" stroke="#6a3a7a" stroke-width="0.8"/><rect x="0.8" y="0.8" width="41.4" height="6" rx="2.5" fill="#efe6da"/><rect x="0.8" y="6" width="41.4" height="1.2" fill="#7a4a50"/><rect x="4" y="10" width="6" height="7" fill="#eee"/><rect x="4" y="20" width="6" height="7" fill="#eee"/></svg>
<div class="ft" style="left:469.2px;top:317.9px">Desktop</div>
<svg class="a" style="left:585.9px;top:279.0px" width="44" height="36"><use href="#fold"/></svg>
<svg class="a" style="left:604.9px;top:290.0px" width="24" height="27" viewBox="0 0 24 27"><path d="M0.5,0.5 H16 L23.5,8 V26.5 H0.5 Z" fill="#ececec" stroke="#b0b0b0" stroke-width="1"/><path d="M16,0.5 V8 H23.5" fill="#fff" stroke="#bbb" stroke-width="0.8"/><g stroke="#9a9a9a" stroke-width="0.8"><path d="M3,5 H13 M3,7.5 H14 M3,10 H8 M3,13.5 H20 M3,16 H20 M3,18.5 H16 M3,22 H20 M3,24.5 H15"/></g></svg>
<div class="ft" style="left:561.9px;top:317.9px">Documents</div>
<svg class="a" style="left:678.6px;top:279.0px" width="44" height="36"><use href="#fold"/></svg>
<svg class="a" style="left:696.6px;top:290.0px" width="24" height="25" viewBox="0 0 24 25"><defs><linearGradient id="ag" x1="0" y1="0" x2="0" y2="1"><stop offset="0" stop-color="#f4f4f4"/><stop offset="1" stop-color="#b8b8b8"/></linearGradient></defs><path d="M6.5,1 H16.5 V10.5 H22.5 L11.5,24.5 L0.5,10.5 H6.5 Z" fill="url(#ag)" stroke="#bdbdbd" stroke-width="0.6"/></svg>
<div class="ft" style="left:654.6px;top:317.9px">Downloads</div>
<svg class="a" style="left:771.3px;top:279.0px" width="44" height="36"><use href="#fold"/></svg>
<svg class="a" style="left:789.3px;top:289.0px" width="22" height="26" viewBox="0 0 22 26"><path d="M6.5,20 V5 L20,1.5 V17" fill="none" stroke="#3e3e3e" stroke-width="2.4"/><path d="M6.5,6.5 L20,3" stroke="#3e3e3e" stroke-width="3"/><ellipse cx="4" cy="21" rx="3.6" ry="3.2" fill="#4a4a4a"/><ellipse cx="17.5" cy="18" rx="3.6" ry="3.2" fill="#4a4a4a"/></svg>
<div class="ft" style="left:747.3px;top:317.9px">Music</div>
<svg class="a" style="left:864.0px;top:279.0px" width="44" height="36"><use href="#fold"/></svg>
<svg class="a" style="left:877.0px;top:290.0px" width="28" height="27" viewBox="0 0 28 27"><g transform="rotate(-28 10 12)"><rect x="2" y="5" width="16" height="14" fill="#b8b8b8" stroke="#9a9a9a" stroke-width="0.8"/><rect x="4" y="7" width="12" height="10" fill="#6a6a6a"/></g><rect x="8.5" y="8.5" width="18" height="17.5" fill="#f8f8f8" stroke="#bbb" stroke-width="0.8"/><rect x="10.5" y="10.5" width="14" height="13" fill="#3a3640"/></svg>
<div class="ft" style="left:840.0px;top:317.9px">Pictures</div>
<svg class="a" style="left:956.7px;top:279.0px" width="44" height="36"><use href="#fold"/></svg>
<svg class="a" style="left:974.7px;top:290.0px" width="24" height="25" viewBox="0 0 24 25"><defs><linearGradient id="pu" x1="0" y1="0" x2="0" y2="1"><stop offset="0" stop-color="#f0f0f0"/><stop offset="1" stop-color="#bcbcbc"/></linearGradient></defs><path d="M12,1 C15.5,1 17,4 17,7.5 C17,11 15,14 14.2,15 C19,16 23,18.5 23,24.5 H1 C1,18.5 5,16 9.8,15 C9,14 7,11 7,7.5 C7,4 8.5,1 12,1 Z" fill="url(#pu)" stroke="#aaa" stroke-width="0.6"/></svg>
<div class="ft" style="left:932.7px;top:317.9px">Public</div>
<svg class="a" style="left:1049.4px;top:279.0px" width="44" height="36"><use href="#fold"/></svg>
<svg class="a" style="left:1069.4px;top:290.0px" width="24" height="27" viewBox="0 0 24 27"><path d="M0.5,0.5 H16 L23.5,8 V26.5 H0.5 Z" fill="#eaeaea" stroke="#b0b0b0" stroke-width="1"/><path d="M5,3 V26 M0.5,21 H23" stroke="#bbb" stroke-width="0.6"/><text x="8" y="17" font-family="Liberation Sans" font-size="13" fill="#9a9a9a">a</text><path d="M1,13 L1,26 L13,26 Z" fill="none" stroke="#999" stroke-width="0.9"/></svg>
<div class="ft" style="left:1025.4px;top:317.9px">Templates</div>
<svg class="a" style="left:493.2px;top:348.0px" width="44" height="36"><use href="#fold"/></svg>
<svg class="a" style="left:512.7px;top:358.0px" width="20" height="26" viewBox="0 0 18 27" preserveAspectRatio="none"><rect x="0" y="0" width="18" height="27" fill="#3a2a2a"/><rect x="3.5" y="1.5" width="11" height="24" fill="#9a6aa8"/><path d="M3.5,13.5 H14.5" stroke="#5a3a5a" stroke-width="1"/><g fill="#c89a50"><rect x="0.8" y="2" width="1.8" height="2"/><rect x="0.8" y="7" width="1.8" height="2"/><rect x="0.8" y="12" width="1.8" height="2"/><rect x="0.8" y="17" width="1.8" height="2"/><rect x="0.8" y="22" width="1.8" height="2"/><rect x="15.4" y="2" width="1.8" height="2"/><rect x="15.4" y="7" width="1.8" height="2"/><rect x="15.4" y="12" width="1.8" height="2"/><rect x="15.4" y="17" width="1.8" height="2"/><rect x="15.4" y="22" width="1.8" height="2"/></g></svg>
<div class="ft" style="left:469.2px;top:387.3px">Videos</div>
<svg class="a" style="left:585.9px;top:348.0px" width="44" height="36"><use href="#fold"/></svg>
<div class="ft" style="left:561.9px;top:387.3px">kasm_</div><div class="ft" style="left:561.9px;top:403.3px">release_</div><div class="ft" style="left:561.9px;top:419.3px">1.16.1.98...</div>
<svg class="a" style="left:678.6px;top:348.0px" width="44" height="36"><use href="#fold"/></svg>
<div class="ft" style="left:654.6px;top:387.3px">marketing</div>
<svg class="a" style="left:771.3px;top:348.0px" width="44" height="36"><use href="#fold"/></svg>
<div class="ft" style="left:747.3px;top:387.3px">snap</div>
<svg class="a" style="left:864.0px;top:348.0px" width="44" height="36"><use href="#fold"/></svg>
<div class="ft" style="left:840.0px;top:387.3px">test</div>
<svg class="a" style="left:956.7px;top:348.0px" width="44" height="36"><use href="#fold"/></svg>
<div class="ft" style="left:932.7px;top:387.3px">xpipe</div>
<svg class="a" style="left:1049.4px;top:348.0px" width="44" height="36"><use href="#fold"/></svg>
<div class="ft" style="left:1025.4px;top:387.3px">.cache</div>
<svg class="a" style="left:493.2px;top:450.0px" width="44" height="36"><use href="#fold"/></svg>
<div class="ft" style="left:469.2px;top:489.0px">.config</div>
<svg class="a" style="left:585.9px;top:450.0px" width="44" height="36"><use href="#fold"/></svg>
<div class="ft" style="left:561.9px;top:489.0px">.docker</div>
<svg class="a" style="left:678.6px;top:450.0px" width="44" height="36"><use href="#fold"/></svg>
<div class="ft" style="left:654.6px;top:489.0px">.gnupg</div>
<svg class="a" style="left:771.3px;top:450.0px" width="44" height="36"><use href="#fold"/></svg>
<div class="ft" style="left:747.3px;top:489.0px">.kube</div>
<svg class="a" style="left:864.0px;top:450.0px" width="44" height="36"><use href="#fold"/></svg>
<div class="ft" style="left:840.0px;top:489.0px">.local</div>
<svg class="a" style="left:956.7px;top:450.0px" width="44" height="36"><use href="#fold"/></svg>
<div class="ft" style="left:932.7px;top:489.0px">.minikube</div>
<svg class="a" style="left:1049.4px;top:450.0px" width="44" height="36"><use href="#fold"/></svg>
<div class="ft" style="left:1025.4px;top:489.0px">.ssh</div>
<svg class="a" style="left:493.2px;top:519.0px" width="44" height="36"><use href="#fold"/></svg>
<div class="ft" style="left:469.2px;top:557.8px">.vnc</div>
<svg class="a" style="left:585.9px;top:519.0px" width="44" height="36"><use href="#fold"/></svg>
<div class="ft" style="left:561.9px;top:557.8px">.vscode-</div><div class="ft" style="left:561.9px;top:573.8px">server</div>
<svg class="a" style="left:678.6px;top:519.0px" width="44" height="36"><use href="#fold"/></svg>
<div class="ft" style="left:654.6px;top:557.8px">.xpipe</div>
<svg class="a" style="left:773.3px;top:519.0px" width="40" height="36"><use href="#pkg"/></svg>
<div class="a" style="left:781.3px;top:539.0px;width:24px;text-align:center;font-size:12px;line-height:12px;color:#7a5a3a;font-weight:700;opacity:0.85">zip</div>
<div class="ft" style="left:747.3px;top:557.8px">TreeSizeFre</div><div class="ft" style="left:747.3px;top:573.8px">e-Portable.</div><div class="ft" style="left:747.3px;top:589.8px">zip</div>
<svg class="a" style="left:869.0px;top:512.0px" width="34" height="43"><use href="#doc"/></svg>
<div class="ft" style="left:840.0px;top:557.8px">a.txt</div>
<svg class="a" style="left:961.7px;top:512.0px" width="34" height="43"><use href="#doc"/></svg>
<div class="ft" style="left:932.7px;top:557.8px">bb</div>
<svg class="a" style="left:1051.4px;top:519.0px" width="40" height="36"><use href="#pkg"/></svg>
<svg class="a" style="left:1074.4px;top:537.0px" width="17" height="17" viewBox="0 0 16 16"><use href="#lock"/></svg>
<div class="ft" style="left:1025.4px;top:557.8px">homeassist</div><div class="ft" style="left:1025.4px;top:573.8px">ant-</div><div class="ft" style="left:1025.4px;top:589.8px">supervise...</div>
<svg class="a" style="left:498.2px;top:614.0px" width="34" height="43"><use href="#doc"/></svg>
<svg class="a" style="left:518.2px;top:639.0px" width="17" height="17" viewBox="0 0 16 16"><use href="#lock"/></svg>
<div class="ft" style="left:469.2px;top:660.2px">kasm_</div><div class="ft" style="left:469.2px;top:676.2px">install_</div><div class="ft" style="left:469.2px;top:692.2px">17354288</div>
<svg class="a" style="left:590.9px;top:614.0px" width="34" height="43"><use href="#doc"/></svg>
<div class="ft" style="left:561.9px;top:660.2px">kasm_</div><div class="ft" style="left:561.9px;top:676.2px">install_</div><div class="ft" style="left:561.9px;top:692.2px">17354288</div>
<svg class="a" style="left:680.6px;top:621.0px" width="40" height="36"><use href="#pkg"/></svg>
<div class="a" style="left:684.6px;top:643.0px;width:32px;text-align:center;font-size:11.5px;line-height:11px;color:#6e5034;opacity:0.8">tar.gz</div>
<div class="ft" style="left:654.6px;top:660.2px">kasm_</div><div class="ft" style="left:654.6px;top:676.2px">release_</div><div class="ft" style="left:654.6px;top:692.2px">1.16.1.98...</div>
<svg class="a" style="left:776.3px;top:614.0px" width="34" height="43"><use href="#doc"/></svg>
<div class="ft" style="left:747.3px;top:660.2px">kitty.conf</div>
<svg class="a" style="left:869.0px;top:614.0px" width="34" height="43"><use href="#doc"/></svg>
<div class="ft" style="left:840.0px;top:660.2px">out.txt</div>
<svg class="a" style="left:961.7px;top:614.0px" width="34" height="43"><use href="#doc"/></svg>
<div class="ft" style="left:932.7px;top:660.2px">rsa_key.</div><div class="ft" style="left:932.7px;top:676.2px">pem</div>
<svg class="a" style="left:1054.4px;top:614.0px" width="34" height="43"><use href="#blank"/></svg>
<div class="ft" style="left:1025.4px;top:660.2px">rsa_key.</div><div class="ft" style="left:1025.4px;top:676.2px">pem.pub</div>
</div>
<div class="a" style="left:651px;top:4px;width:3px;height:288px;border-radius:1.5px;background:#b4b4b4"></div>
</div>

</body></html>
